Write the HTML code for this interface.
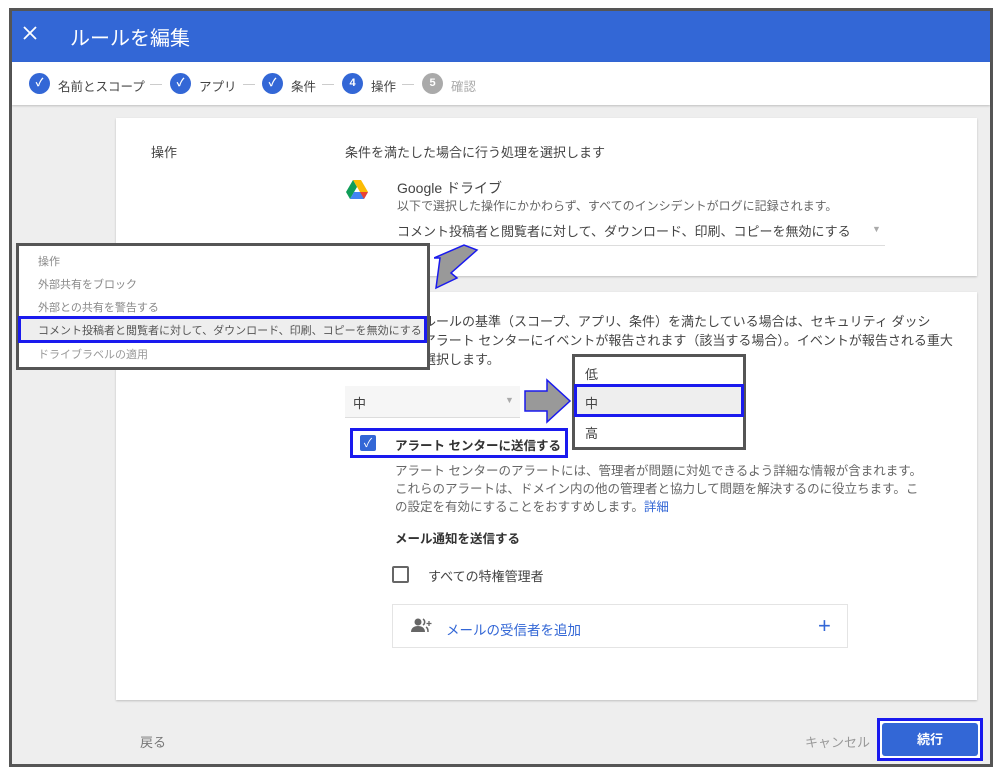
<!DOCTYPE html>
<html><head><meta charset="utf-8"><style>
*{margin:0;padding:0;box-sizing:border-box}
body{width:1000px;height:775px;background:#fff;position:relative;overflow:hidden;font-family:"Liberation Sans","Noto Sans CJK JP",sans-serif;color:#444}
.a{position:absolute;white-space:nowrap}
.frame{position:absolute;left:9px;top:8px;width:984px;height:759px;border:3px solid #555;background:#eee}
.hdr{position:absolute;left:12px;top:11px;width:978px;height:51px;background:#3367d6}
.step{position:absolute;left:12px;top:62px;width:978px;height:43px;background:#fff;box-shadow:0 1px 2px rgba(0,0,0,.2)}
.card{position:absolute;background:#fff;box-shadow:0 1px 2px rgba(0,0,0,.2)}
.c{position:absolute;width:21px;height:21px;border-radius:50%;background:#3367d6;color:#fff;font-size:11px;text-align:center;line-height:21px;font-weight:bold}
.st{font-size:12.5px;color:#444}
.dash{position:absolute;height:1px;width:12px;background:#ccc}
</style></head><body>
<div class="frame"></div>
<div class="hdr"></div>
<svg class="a" style="left:23px;top:26px" width="14" height="14"><path d="M1 1l12 12M13 1L1 13" stroke="#fff" stroke-width="1.8"/></svg>
<div class="a" style="left:70px;top:22px;color:#fff;font-size:20px">ルールを編集</div>
<div class="step"></div>
<div class="c" style="left:29px;top:73px">✓</div><div class="a st" style="left:58px;top:76px">名前とスコープ</div><div class="dash" style="left:150px;top:84px"></div>
<div class="c" style="left:170px;top:73px">✓</div><div class="a st" style="left:199px;top:76px">アプリ</div><div class="dash" style="left:243px;top:84px"></div>
<div class="c" style="left:262px;top:73px">✓</div><div class="a st" style="left:291px;top:76px">条件</div><div class="dash" style="left:322px;top:84px"></div>
<div class="c" style="left:342px;top:73px">4</div><div class="a st" style="left:371px;top:76px">操作</div><div class="dash" style="left:402px;top:84px"></div>
<div class="c" style="left:422px;top:73px;background:#aaa">5</div><div class="a st" style="left:451px;top:76px;color:#aaa">確認</div>

<div class="card" style="left:116px;top:118px;width:861px;height:158px"></div>
<div class="a" style="left:151px;top:142px;font-size:13px">操作</div>
<div class="a" style="left:345px;top:142px;font-size:13px">条件を満たした場合に行う処理を選択します</div>
<svg class="a" style="left:346px;top:180px" width="22" height="20" viewBox="0 0 22 20"><path d="M7 0h8l7 12h-8z" fill="#fbbc04"/><path d="M7 0l-7 12 4 7 7-12z" fill="#0f9d58"/><path d="M4 19h14l4-7H8z" fill="#4285f4"/><path d="M18 19l4-7h-8z" fill="#ea4335"/></svg>
<div class="a" style="left:397px;top:178px;font-size:14px">Google ドライブ</div>
<div class="a" style="left:397px;top:197px;font-size:12px;color:#666">以下で選択した操作にかかわらず、すべてのインシデントがログに記録されます。</div>
<div class="a" style="left:397px;top:221px;font-size:13px">コメント投稿者と閲覧者に対して、ダウンロード、印刷、コピーを無効にする</div>
<div class="a" style="left:872px;top:224px;font-size:9px;color:#aaa">▼</div>
<div class="a" style="left:397px;top:245px;width:488px;height:1px;background:#ddd"></div>

<div class="card" style="left:116px;top:292px;width:861px;height:408px"></div>
<div class="a" style="left:397px;top:312px;font-size:13px;line-height:19px">このルールの基準（スコープ、アプリ、条件）を満たしている場合は、セキュリティ ダッシ<br>ュ、アラート センターにイベントが報告されます（該当する場合）。イベントが報告される重大<br>度を選択します。</div>
<div class="a" style="left:345px;top:386px;width:175px;height:32px;background:#f6f6f6;border-bottom:1px solid #ddd"></div>
<div class="a" style="left:353px;top:393px;font-size:13px">中</div>
<div class="a" style="left:505px;top:395px;font-size:9px;color:#aaa">▼</div>
<svg class="a" style="left:523px;top:378px" width="50" height="46"><path d="M2 13h22V2l23 21-23 21V33H2z" fill="#999" stroke="#1a1aee" stroke-width="1.5"/></svg>
<div class="a" style="left:572px;top:354px;width:174px;height:96px;border:3px solid #555;background:#fff"></div>
<div class="a" style="left:585px;top:364px;font-size:13px">低</div>
<div class="a" style="left:574px;top:384px;width:170px;height:33px;border:3px solid #1a1aee;background:#eee"></div>
<div class="a" style="left:585px;top:393px;font-size:13px">中</div>
<div class="a" style="left:585px;top:423px;font-size:13px">高</div>

<div class="a" style="left:350px;top:428px;width:218px;height:30px;border:3px solid #1a1aee;background:#fff"></div>
<div class="a" style="left:360px;top:435px;width:16px;height:16px;border-radius:2px;background:#3367d6;color:#fff;font-size:12px;text-align:center;line-height:16px">✓</div>
<div class="a" style="left:395px;top:435px;font-size:12.5px;font-weight:bold;color:#333">アラート センターに送信する</div>
<div class="a" style="left:395px;top:462px;font-size:12.5px;line-height:18px;color:#666">アラート センターのアラートには、管理者が問題に対処できるよう詳細な情報が含まれます。<br>これらのアラートは、ドメイン内の他の管理者と協力して問題を解決するのに役立ちます。こ<br>の設定を有効にすることをおすすめします。<span style="color:#3367d6">詳細</span></div>
<div class="a" style="left:395px;top:528px;font-size:12.5px;font-weight:bold;color:#333">メール通知を送信する</div>
<div class="a" style="left:392px;top:566px;width:17px;height:17px;border:2px solid #666;border-radius:2px"></div>
<div class="a" style="left:428px;top:566px;font-size:13px">すべての特権管理者</div>
<div class="a" style="left:392px;top:604px;width:456px;height:44px;border:1px solid #e4e4e4"></div>
<svg class="a" style="left:411px;top:617px" width="22" height="16"><circle cx="7" cy="5" r="3.5" fill="#666"/><path d="M0 15c0-4 3-6 7-6s7 2 7 6z" fill="#666"/><path d="M12 2a3.5 3.5 0 010 6M15 10c2 1 2 3 2 5" stroke="#666" stroke-width="1.5" fill="none"/><path d="M18 4v5M15.5 6.5h5" stroke="#666" stroke-width="1.3"/></svg>
<div class="a" style="left:446px;top:619px;font-size:13.5px;color:#3367d6">メールの受信者を追加</div>
<div class="a" style="left:818px;top:613px;font-size:22px;color:#3367d6">+</div>

<div class="a" style="left:16px;top:243px;width:414px;height:127px;border:3px solid #555;background:#fff"></div>
<div class="a" style="left:38px;top:253px;font-size:11px;color:#888">操作</div>
<div class="a" style="left:38px;top:276px;font-size:11px;color:#888">外部共有をブロック</div>
<div class="a" style="left:38px;top:299px;font-size:11px;color:#888">外部との共有を警告する</div>
<div class="a" style="left:18px;top:316px;width:409px;height:27px;border:3px solid #1a1aee;background:#eee"></div>
<div class="a" style="left:38px;top:322px;font-size:11px;color:#555">コメント投稿者と閲覧者に対して、ダウンロード、印刷、コピーを無効にする</div>
<div class="a" style="left:38px;top:346px;font-size:11px;color:#999">ドライブラベルの適用</div>
<svg class="a" style="left:434px;top:244px" width="45" height="46"><path d="M2 44l4-30-6 0 30-13 13 5-26 23 6 5z" fill="#999" stroke="#1a1aee" stroke-width="1.5"/></svg>

<div class="a" style="left:140px;top:732px;font-size:13px;color:#777">戻る</div>
<div class="a" style="left:805px;top:732px;font-size:13px;color:#999">キャンセル</div>
<div class="a" style="left:877px;top:718px;width:106px;height:43px;border:3px solid #1a1aee;background:#fff"></div>
<div class="a" style="left:882px;top:723px;width:96px;height:33px;background:#3367d6;border-radius:3px;color:#fff;font-size:13px;text-align:center;line-height:33px;font-weight:bold">続行</div>
</body></html>
